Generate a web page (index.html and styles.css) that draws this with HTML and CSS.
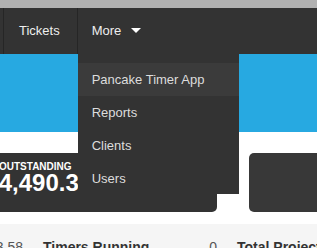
FILE: index.html
```html
<!DOCTYPE html>
<html>
<head>
<meta charset="utf-8">
<link rel="stylesheet" href="styles.css">
</head>
<body>
<div class="topbar"></div>
<nav class="navbar">
  <div class="nav-stub"></div>
  <div class="nav-item">Tickets</div>
  <div class="nav-item nav-more">More <span class="caret"></span>
    <ul class="dropdown">
      <li class="active">Pancake Timer App</li>
      <li>Reports</li>
      <li>Clients</li>
      <li>Users</li>
    </ul>
  </div>
</nav>
<div class="hero"></div>
<section class="cards">
  <div class="card card-main">
    <div class="card-label">TOTAL OUTSTANDING</div>
    <div class="card-value">$14,490.38</div>
  </div>
  <div class="card card-side"></div>
</section>
<section class="summary">
  <div class="cell-prev"><span class="val">$3.58</span></div>
  <div class="cell"><span class="lbl">Timers Running</span><span class="val">0</span></div>
  <div class="cell cell-last"><span class="lbl">Total Projects</span></div>
</section>
</body>
</html>
```
FILE: styles.css
```css
* { box-sizing: border-box; }
html, body { margin: 0; padding: 0; }
body {
  font-family: "Liberation Sans", Arial, sans-serif;
  background: #ffffff;
  width: 317px;
  height: 248px;
  overflow: hidden;
  position: relative;
}
.topbar {
  height: 8px;
  background: #b1b1b1;
}
.navbar {
  height: 46px;
  background: #333333;
  display: flex;
  align-items: stretch;
}
.nav-stub {
  width: 4px;
  border-right: 1px solid #262626;
}
.nav-item {
  display: flex;
  align-items: center;
  color: #eeeeee;
  font-size: 13px;
  padding: 0 17px 1px 15px;
  border-right: 1px solid #262626;
}
.nav-more {
  position: relative;
  border-right: none;
  padding-left: 14px;
}
.caret {
  display: inline-block;
  width: 0;
  height: 0;
  margin-left: 10px;
  border-left: 5px solid transparent;
  border-right: 5px solid transparent;
  border-top: 5px solid #ffffff;
}
.dropdown {
  position: absolute;
  left: 0;
  top: 46px;
  width: 161px;
  height: 140px;
  margin: 0;
  padding: 9px 0 0;
  list-style: none;
  background: #333333;
  z-index: 10;
}
.dropdown li {
  height: 33px;
  line-height: 33px;
  padding-left: 14px;
  font-size: 13px;
  color: #dddddd;
}
.dropdown li.active {
  background: #3b3b3b;
}
.hero {
  height: 78px;
  background: #27a9e1;
}
.cards {
  height: 92px;
  padding-top: 21px;
  display: flex;
  gap: 32px;
}
.card {
  height: 59px;
  background: #333333;
  border-radius: 0 5px 5px 0;
  flex-shrink: 0;
}
.card-main {
  width: 217px;
  padding-top: 9px;
  overflow: hidden;
  color: #ffffff;
}
.card-side {
  flex: 1;
  border-radius: 5px 0 0 5px;
  background: #383838;
}
.card-label {
  font-size: 10px;
  font-weight: bold;
  margin-left: -36px;
  white-space: nowrap;
  line-height: 10px;
}
.card-value {
  font-size: 24px;
  font-weight: bold;
  margin-left: -28px;
  white-space: nowrap;
  line-height: 22px;
}
.summary {
  height: 26px;
  background: #f5f5f5;
  display: flex;
  padding-top: 15px;
  font-size: 14px;
  line-height: 16px;
  white-space: nowrap;
}
.cell-prev {
  width: 23px;
  flex-shrink: 0;
  display: flex;
  justify-content: flex-end;
}
.cell {
  margin-left: 20px;
  width: 174px;
  flex-shrink: 0;
  display: flex;
  justify-content: space-between;
}
.cell-last {
  width: auto;
}
.lbl {
  font-weight: bold;
  color: #333333;
}
.val {
  color: #555555;
}
```
